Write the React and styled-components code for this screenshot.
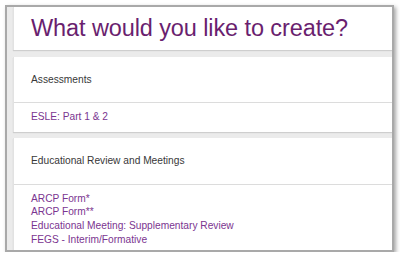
import React from 'react';
import styled, { createGlobalStyle } from 'styled-components';

const Global = createGlobalStyle`
  html, body { margin: 0; padding: 0; background: #fff; }
  body { font-family: "Liberation Sans", Arial, sans-serif; }
`;

const Frame = styled.div`
  position: relative;
  margin: 5px 0 0 5px;
  width: 379px;
  height: 243px;
  border: 2px solid #a9a9a9;
  box-shadow: 2px 2px 4px rgba(0, 0, 0, 0.35);
  background: #ebebeb;
  overflow: hidden;
  display: flex;
  flex-direction: column;
  gap: 7px;
  padding-left: 6px;
  box-sizing: content-box;
`;

const Card = styled.div`
  background: #fff;
  border-left: 1px solid #e2e2e2;
  box-shadow: 0 1px 1px rgba(0, 0, 0, 0.12);
  flex-shrink: 0;
  margin-top: ${p => p.$nudge || 0}px;
`;

const Title = styled.h1`
  margin: 0;
  height: 43px;
  display: flex;
  align-items: center;
  padding-left: 17px;
  font-family: "Liberation Sans", Arial, sans-serif;
  font-weight: 400;
  font-size: 23.5px;
  color: #6a1f6f;
  letter-spacing: -0.1px;
`;

const Header = styled.div`
  height: ${p => p.$h}px;
  display: flex;
  align-items: center;
  padding-left: 17px;
  font-size: 10.2px;
  color: #383838;
  border-bottom: 1px solid #dcdcdc;
`;

const Links = styled.div`
  display: flex;
  flex-direction: column;
  padding: ${p => p.$pad};
  padding-left: 17px;
`;

const Link = styled.a`
  font-size: 10.2px;
  line-height: 13.7px;
  color: #7b3590;
  text-decoration: none;
`;

export default function App() {
  return (
    <>
      <Global />
      <Frame>
        <Card>
          <Title>What would you like to create?</Title>
        </Card>
        <Card>
          <Header $h={45}>Assessments</Header>
          <Links $pad="7px 0 8px">
            <Link href="#">ESLE: Part 1 &amp; 2</Link>
          </Links>
        </Card>
        <Card $nudge={-1}>
          <Header $h={46}>Educational Review and Meetings</Header>
          <Links $pad="7px 0 6px">
            <Link href="#">ARCP Form*</Link>
            <Link href="#">ARCP Form**</Link>
            <Link href="#">Educational Meeting: Supplementary Review</Link>
            <Link href="#">FEGS - Interim/Formative</Link>
          </Links>
        </Card>
      </Frame>
    </>
  );
}
